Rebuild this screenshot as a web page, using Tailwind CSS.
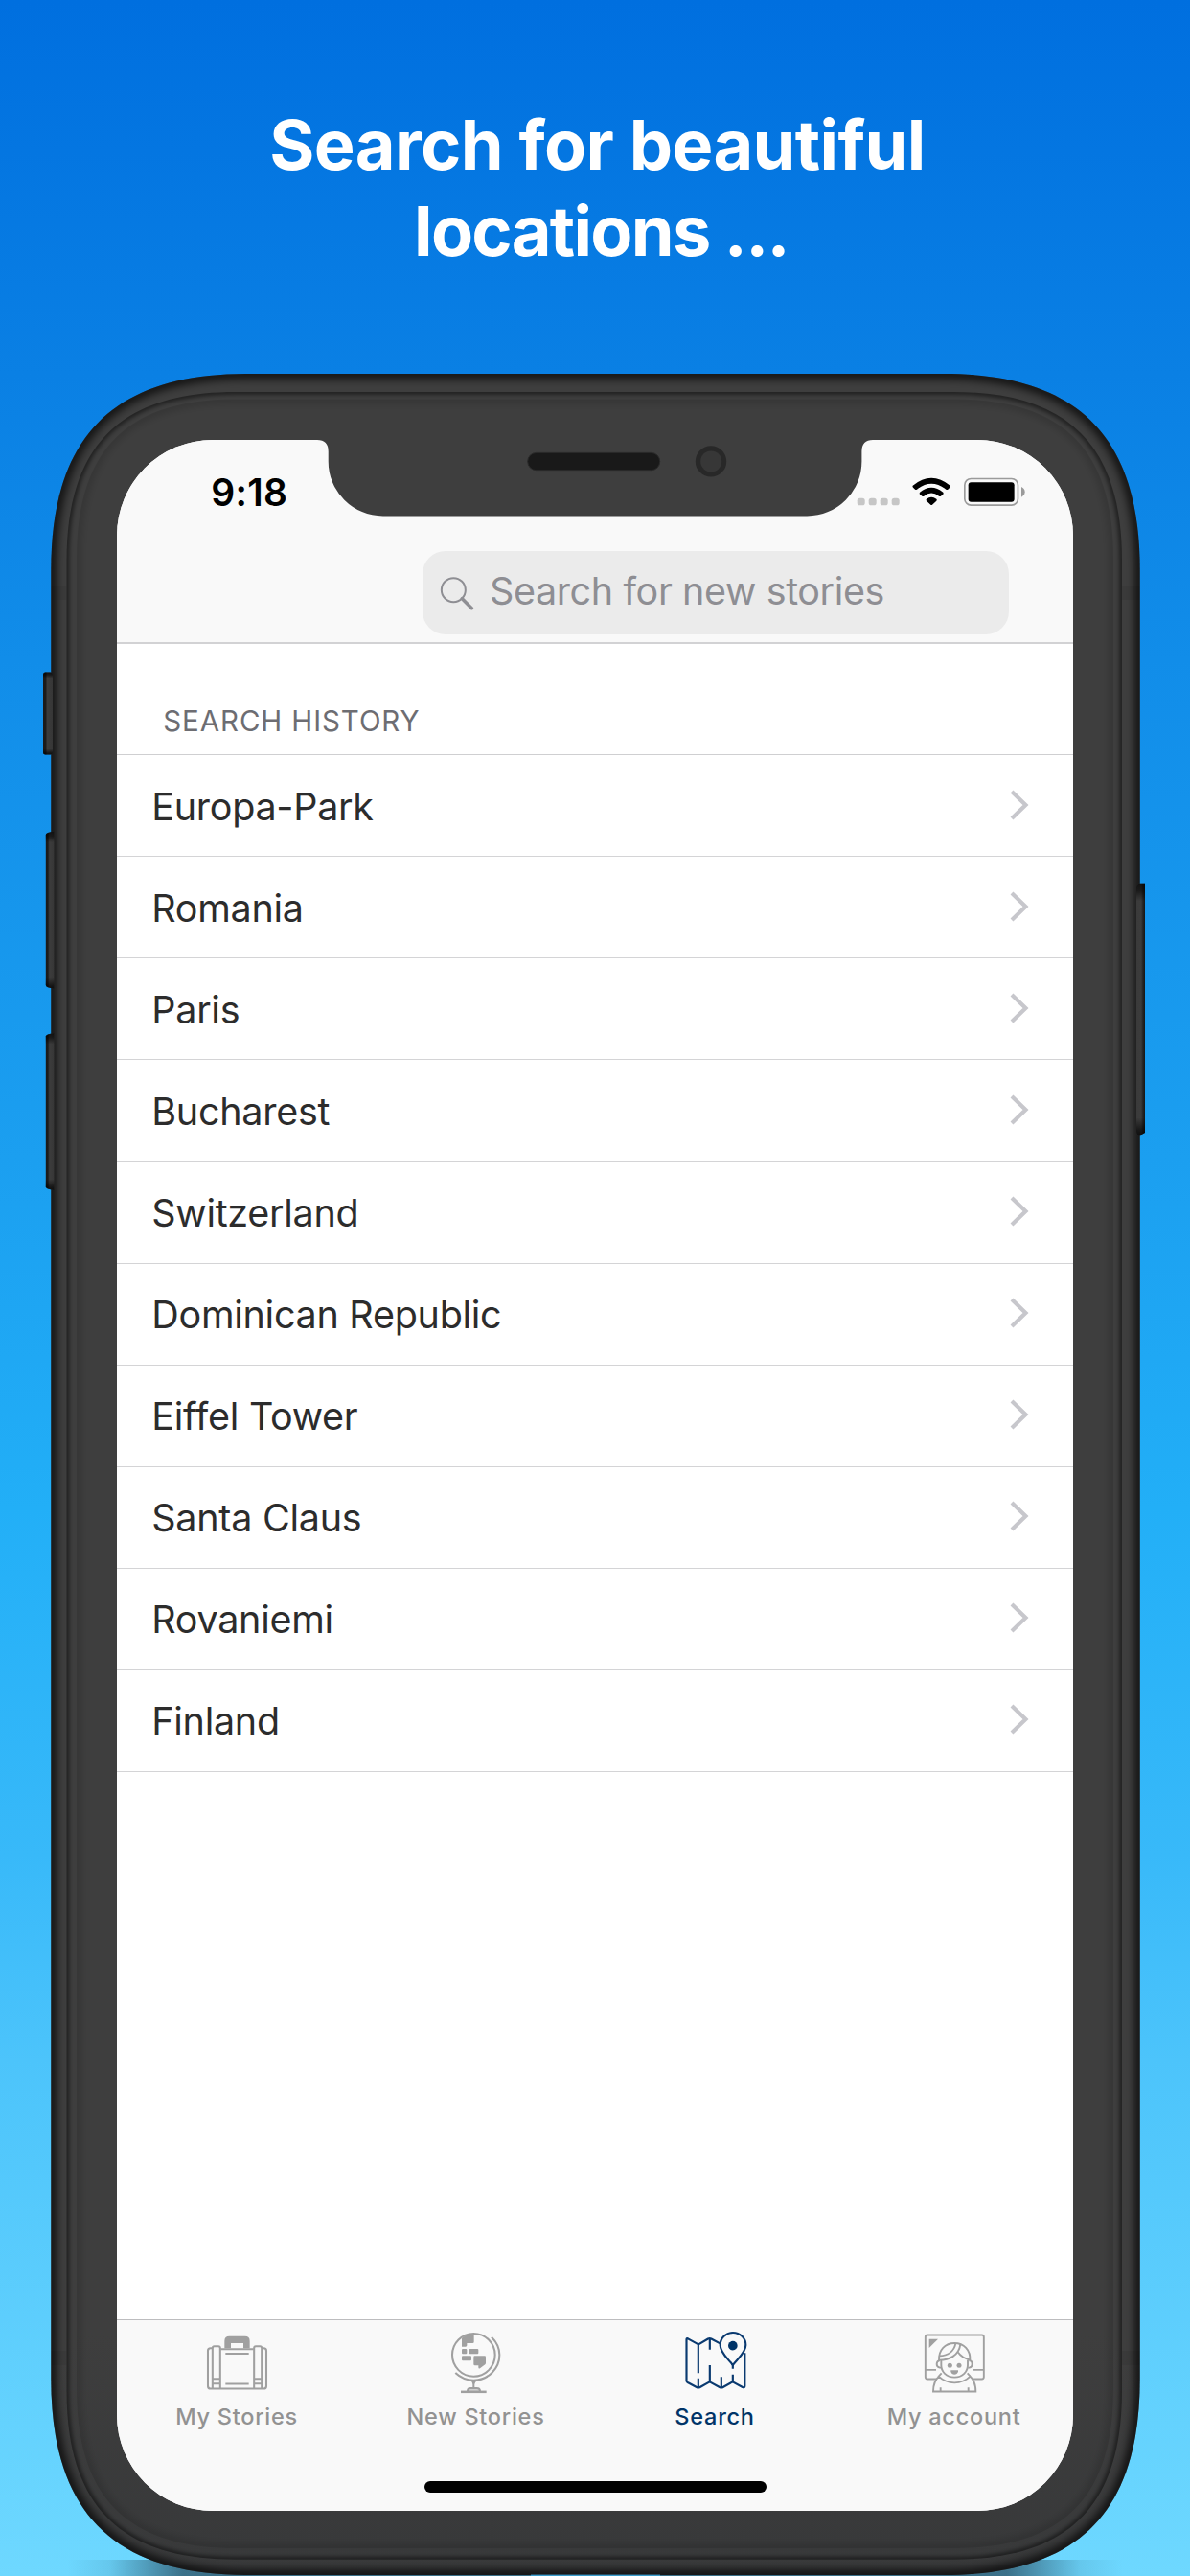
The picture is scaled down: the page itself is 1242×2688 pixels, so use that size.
<!DOCTYPE html>
<html lang="en">
<head>
<meta charset="utf-8">
<title>Search for beautiful locations</title>
<script src="https://cdn.jsdelivr.net/npm/@tailwindcss/browser@4"></script>
</head>
<body class="w-[1242px] h-[2688px] overflow-hidden font-['Inter',sans-serif]">
<main class="relative w-[1242px] h-[2688px] overflow-hidden bg-[linear-gradient(180deg,#006fdf_0%,#0a80e4_14.5%,#118de9_25.6%,#1b9ff0_45%,#22aff7_58.6%,#38b9f9_72%,#4cc4fb_80%,#6ed8ff_100%)]">

  <!-- Phone body -->
  <svg class="absolute inset-0" width="1242" height="2688" viewBox="0 0 1242 2688" fill="none">
    <defs>
      <path id="p0" d="M258.3 390H984.7C1124.7 390 1189.7 455 1189.7 595V2482C1189.7 2622 1124.7 2687 984.7 2687H258.3C118.3 2687 53.3 2622 53.3 2482V595C53.3 455 118.3 390 258.3 390Z"/>
      <path id="p1" d="M245.5 409H995C1115 409 1171 465 1171 585V2494.7C1171 2614.7 1115 2670.7 995 2670.7H245.5C125.5 2670.7 69.5 2614.7 69.5 2494.7V585C69.5 465 125.5 409 245.5 409Z"/>
      <path id="p2" d="M246 416.5H996C1109 416.5 1162 469 1162 582.5V2493C1162 2606 1109 2659 996 2659H246C133 2659 80 2606 80 2493V582.5C80 469 133 416.5 246 416.5Z"/>
      <clipPath id="c0"><use href="#p0"/></clipPath>
      <clipPath id="c1"><use href="#p1"/></clipPath>
      <clipPath id="c2"><use href="#p2"/></clipPath>
      <filter id="b4" filterUnits="userSpaceOnUse" x="0" y="300" width="1242" height="2388"><feGaussianBlur stdDeviation="4"/></filter>
      <filter id="b2" filterUnits="userSpaceOnUse" x="0" y="300" width="1242" height="2388"><feGaussianBlur stdDeviation="2"/></filter>
      <linearGradient id="sh" x1="70" x2="1172" y1="0" y2="0" gradientUnits="userSpaceOnUse">
        <stop offset="0" stop-color="#20394a" stop-opacity="0"/><stop offset=".04" stop-color="#20394a" stop-opacity=".1"/><stop offset=".11" stop-color="#20394a" stop-opacity=".65"/>
        <stop offset=".89" stop-color="#20394a" stop-opacity=".65"/><stop offset=".96" stop-color="#20394a" stop-opacity=".1"/><stop offset="1" stop-color="#20394a" stop-opacity="0"/>
      </linearGradient>
      <linearGradient id="btnL" x1="0" x2="1" y1="0" y2="0"><stop offset="0" stop-color="#1a1a1a"/><stop offset=".25" stop-color="#1c1c1c"/><stop offset=".45" stop-color="#3c3c3c"/><stop offset="1" stop-color="#363636"/></linearGradient>
      <linearGradient id="btnR" x1="1" x2="0" y1="0" y2="0"><stop offset="0" stop-color="#161616"/><stop offset=".25" stop-color="#262626"/><stop offset=".45" stop-color="#3c3c3c"/><stop offset="1" stop-color="#3a3a3a"/></linearGradient>
      <linearGradient id="capS" x1="0" x2="0" y1="0" y2="1"><stop offset="0" stop-color="#000" stop-opacity=".7"/><stop offset=".03" stop-color="#000" stop-opacity=".55"/><stop offset=".07" stop-color="#000" stop-opacity="0"/><stop offset=".93" stop-color="#000" stop-opacity="0"/><stop offset=".98" stop-color="#000" stop-opacity=".6"/><stop offset="1" stop-color="#000" stop-opacity=".75"/></linearGradient>
      <linearGradient id="bodyG" x1="0" x2="0" y1="0" y2="1"><stop offset="0" stop-color="#3e3e3e"/><stop offset=".9" stop-color="#3e3e3e"/><stop offset="1" stop-color="#38393a"/></linearGradient>
    </defs>
    <rect x="70" y="2671" width="1102" height="17" fill="url(#sh)"/>
    <use href="#p0" fill="url(#bodyG)"/>
    <g clip-path="url(#c0)"><use href="#p0" stroke="#000" stroke-opacity=".72" stroke-width="11" filter="url(#b4)"/></g>
    <rect x="53.5" y="611" width="16" height="15" fill="#000" fill-opacity=".05"/>
    <rect x="1171" y="611" width="18.5" height="15" fill="#000" fill-opacity=".05"/>
    <rect x="53.5" y="2453" width="16" height="15" fill="#000" fill-opacity=".05"/>
    <rect x="1171" y="2453" width="18.5" height="15" fill="#000" fill-opacity=".05"/>
    <use href="#p1" fill="url(#bodyG)"/>
    <g clip-path="url(#c1)"><use href="#p1" stroke="#000" stroke-opacity=".55" stroke-width="5" filter="url(#b2)"/></g>
    <use href="#p2" fill="url(#bodyG)"/>
    <g clip-path="url(#c2)"><use href="#p2" stroke="#000" stroke-opacity=".22" stroke-width="6" filter="url(#b4)"/></g>
    <rect x="554" y="2686.6" width="135" height="1.4" fill="#3d9fce"/>
    <!-- Side buttons -->
    <rect x="45" y="701.5" width="10" height="86" rx="2.5" fill="url(#btnL)"/><rect x="45" y="701.5" width="10" height="86" rx="2.5" fill="url(#capS)"/>
    <path d="M47.8 871Q47.8 869 56.5 867.6V1031.8Q47.8 1030.6 47.8 1028Z" fill="url(#btnL)"/><path d="M47.8 871Q47.8 869 56.5 867.6V1031.8Q47.8 1030.6 47.8 1028Z" fill="url(#capS)"/>
    <path d="M47.8 1081.4Q47.8 1079.4 56.5 1078V1242Q47.8 1240.8 47.8 1238.2Z" fill="url(#btnL)"/><path d="M47.8 1081.4Q47.8 1079.4 56.5 1078V1242Q47.8 1240.8 47.8 1238.2Z" fill="url(#capS)"/>
    <path d="M1186 926Q1186.600 921.7 1189 921.7H1195V1182Q1191 1184.800 1188 1184.800Q1186 1184 1186 1181Z" fill="url(#btnR)"/><path d="M1186 926Q1186.600 921.7 1189 921.7H1195V1182Q1191 1184.800 1188 1184.800Q1186 1184 1186 1181Z" fill="url(#capS)"/>
  </svg>

  <h1 class="relative pt-[106px] pl-[5px] text-center text-[72px] leading-[90px] font-bold text-white"><span class="tracking-[-0.6px]">Search for beautiful</span><br><span class="tracking-[-1.7px] ml-2">locations ...</span></h1>

  <section class="relative mt-[173.3px] ml-[122.3px] flex h-[2161px] w-[998px] flex-col overflow-hidden rounded-[100px] bg-white">
    <header class="flex h-[213px] shrink-0 flex-col border-b-2 border-[#d2d2d4] bg-[#f9f9f9]">
      <div class="flex h-[116px] shrink-0 items-start justify-between pt-[39px] pr-[50px] pl-[98px]">
        <span class="text-[39px] leading-[31px] font-semibold tracking-[0.3px] text-black">9:18</span>
        <svg width="176" height="30.67" viewBox="160 384 528 92" fill="none">
          <g fill="#c6c6c6"><rect x="162" y="449" width="24" height="23" rx="8"/><rect x="198" y="449" width="24" height="23" rx="8"/><rect x="234" y="449" width="24" height="23" rx="8"/><rect x="270" y="449" width="24" height="23" rx="8"/></g>
          <g fill="#000"><path d="M336 410Q394 362 453 410Q455 413 452 416L445 423Q443 424 440 422Q394 386 349 422Q346 424 344 423L337 416Q334 413 336 410Z"/>
          <path d="M358 431Q394 402 431 431Q433 434 431 437L424 443Q421 445 418 443Q394 424 371 443Q368 445 365 443L358 437Q356 434 358 431Z"/>
          <path d="M379 452Q394 441 410 452Q413 455 410 458L397 470Q395 472 392 470L379 458Q376 455 379 452Z"/></g>
          <rect x="498.500" y="388.500" width="167" height="83" rx="20" stroke="#9b9b9b" stroke-width="5"/>
          <rect x="510" y="400" width="144" height="61" rx="9" fill="#000"/>
          <path d="M676 414Q687 419 687 430Q687 441 676 446Z" fill="#9b9b9b"/>
        </svg>
      </div>
      <div class="ml-[318.700px] flex h-[87px] w-[612px] items-center rounded-[24px] bg-[#ebebeb] pl-[18px] text-[#8e8e93]">
        <svg width="36" height="36" viewBox="86 102 108 108" fill="none" stroke="currentColor" stroke-linecap="round"><circle cx="129" cy="146" r="37.500" stroke-width="6"/><path d="M156 173L186 203" stroke-width="10.500"/></svg>
        <span class="relative -top-px ml-[16px] text-[39.500px] leading-none tracking-[-0.38px]">Search for new stories</span>
      </div>
    </header>

    <h2 class="flex h-[116px] shrink-0 items-end border-b border-[#cfcfd1] pb-[15px] pl-[48px] text-[29.500px] leading-[40px] tracking-[0.9px] text-[#6d6d72]">SEARCH HISTORY</h2>
    <ul id="history"></ul>

    <nav class="mt-auto grid h-[200px] shrink-0 grid-cols-4 border-t border-[#bdbdbf] bg-[#f9f9f9] pt-[11px] text-[23.500px] font-medium tracking-[0.75px] text-[#929292]">
      <a class="flex flex-col items-center gap-[7px] leading-[30px]">
        <svg width="68" height="68" viewBox="279 98 204 204" fill="none" stroke="#a0a0a0" stroke-width="6.200">
          <path d="M343 153V130Q343 115 358 115H407Q422 115 422 130V153H402V137H363V153Z" fill="#a0a0a0" stroke="none"/>
          <path d="M331 155.500H434M304 153H299Q291 153 291 161V271Q291 279.500 299 279.500H466Q474 279.500 474 271V161Q474 153 466 153H461"/>
          <path d="M305.500 279V153Q305.500 147 311 147H324Q329.500 147 329.500 153V279M305.500 249H329.500M305.500 264H329.500M435.500 279V153Q435.500 147 441 147H454Q459.500 147 459.500 153V279M435.500 249H459.500M435.500 264H459.500"/>
          <path d="M346 170H419M346 264.500H419" stroke-width="6.500"/>
        </svg>My Stories</a>
      <a class="flex flex-col items-center gap-[7px] leading-[30px]">
        <svg width="68" height="68" viewBox="1029 98 204 204" fill="none" stroke="#a0a0a0" stroke-width="6.200">
          <circle cx="1123" cy="174" r="67"/>
          <path d="M1179 118Q1204 142 1204 174C1204 218 1168 253 1123 253Q1090 253 1066 230"/>
          <g fill="#a0a0a0" stroke="none"><path d="M1086 121Q1102 108 1124 108V133Q1124 137 1120 137H1102V144Q1102 148 1098 148H1086Z"/><rect x="1086" y="155" width="16" height="16" rx="3"/><rect x="1109" y="155" width="29" height="16" rx="3"/><rect x="1086" y="177" width="30" height="15" rx="3"/><path d="M1126 177H1158Q1161 177 1161 181V199Q1161 203 1157 205L1143 216Q1138 218 1138 213V207H1127Q1123 207 1123 203V181Q1123 177 1126 177Z"/><path d="M1112 254H1136Q1126 259 1126 266V275H1120V266Q1120 259 1112 254Z"/></g>
          <path d="M1104 288Q1104 278 1113 278H1133Q1143 278 1143 288" fill="#cfcfcf"/><path d="M1083 289.500H1163" stroke-width="7.500"/>
        </svg>New Stories</a>
      <a class="flex flex-col items-center gap-[7px] leading-[30px] text-[#003468]">
        <svg width="68" height="68" viewBox="276 98 204 204" fill="none" stroke="#0a3a70" stroke-width="6.500" stroke-linejoin="round">
          <path d="M396 139L367 123.500Q362 121 357 123.500L327 141L294 123Q289.500 121 289.500 126V254Q289.500 258 293 260L321 275Q326.500 278 332 275L362 258L393 275Q399 278 404 275L434 258L465 275Q472 278 472 271V168"/>
          <path d="M326.500 142V231M326.500 247V276M362.500 123V157M362.500 206V258M398.500 243V276M434.500 235V258M434.500 203V217"/>
          <path d="M434.500 206C422 188 395 168 395 143A40 39 0 0 1 475 143C475 168 447 188 434.500 206Z"/>
          <circle cx="434.500" cy="145" r="14.500" fill="#003468" stroke="none"/>
        </svg>Search</a>
      <a class="flex flex-col items-center gap-[7px] leading-[30px]">
        <svg width="68" height="68" viewBox="1026 98 204 204" fill="none" stroke="#a0a0a0" stroke-width="5.700">
          <path d="M1073 249.500H1044Q1037.500 249.500 1037.500 243V118Q1037.500 111.500 1044 111.500H1214Q1220.500 111.500 1220.500 118V243Q1220.500 249.500 1214 249.500H1184M1038 220.500H1071M1187 220.500H1220"/>
          <path d="M1049 124H1077L1049 152Z" fill="#a0a0a0" stroke="none"/>
          <path d="M1080 192C1078 158 1100 137 1128.500 137S1180 158 1177 192"/>
          <path d="M1083 192H1080Q1073 194 1073 203T1083 214H1086M1174 192H1178Q1184 194 1184 203T1175 214H1171"/>
          <path d="M1087 190V206C1087 226 1103 244 1128.500 244S1170 226 1170 206V190M1081 190C1112 190 1142 176 1147 141M1082 177C1106 176 1127 164 1132 138M1139 165Q1152 184 1177 189"/>
          <circle cx="1114" cy="206.500" r="7.500" fill="#a0a0a0" stroke="none"/><circle cx="1143" cy="206.500" r="7.500" fill="#a0a0a0" stroke="none"/>
          <path d="M1117 222H1140V226Q1137 235 1128.500 235T1117 226Z" fill="#a0a0a0" stroke="none"/>
          <path d="M1088 231L1079 241Q1100 261 1128.500 261T1178 241L1169 231M1082 239Q1062 256 1062 288.500H1195Q1195 256 1176 239M1085 276V288M1172 276V288"/>
        </svg>My account</a>
    </nav>

    <!-- Notch and home indicator lie over the screen -->
    <svg class="absolute top-0 left-[209px]" width="580" height="80" viewBox="331.300 459.300 580 80" fill="none">
      <path d="M331 458V459.300Q343 459.300 343 471.300V481.700A57 57 0 0 0 400 538.700H842.700A57 57 0 0 0 899.700 481.700V471.300Q899.700 459.300 911.700 459.300V458Z" fill="#3e3e3e"/>
      <rect x="551" y="472.700" width="138" height="18.300" rx="9.100" fill="#191919" stroke="#2a2a2a"/>
      <circle cx="742.300" cy="481.700" r="16.200" fill="#282828"/><circle cx="742.500" cy="481.700" r="11" fill="#373737"/>
    </svg>
    <div class="absolute bottom-[19px] left-[320.700px] h-[12px] w-[357px] rounded-full bg-black"></div>
  </section>
</main>
<script>
const places = ["Europa-Park","Romania","Paris","Bucharest","Switzerland","Dominican Republic","Eiffel Tower","Santa Claus","Rovaniemi","Finland"];
document.getElementById("history").innerHTML = places.map(p => `
  <li class="flex h-[106.070px] items-center justify-between border-b border-[#d4d4d6] pl-[36px] pr-[46px]">
    <span class="relative top-[1.500px] text-[39.500px] leading-none tracking-[-0.28px] text-[#2c2c2c]">${p}</span>
    <svg class="relative -top-px" width="20" height="32" viewBox="0 0 20 32" fill="none" stroke="#c7c7cc" stroke-width="4.200"><path d="M2 2L16.500 16L2 30"/></svg>
  </li>`).join("");
</script>
</body>
</html>
